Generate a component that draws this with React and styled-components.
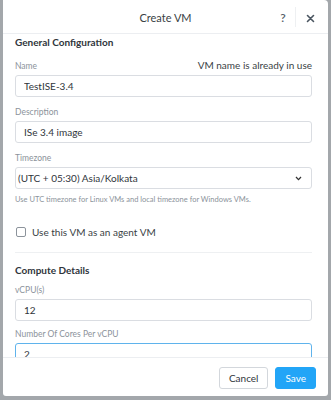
import React from "react";
import styled, { createGlobalStyle } from "styled-components";

const GlobalStyle = createGlobalStyle`
  html, body {
    margin: 0;
    padding: 0;
    background: #a3a7ab;
    font-family: Lato, "Liberation Sans", sans-serif;
    -webkit-font-smoothing: antialiased;
  }
`;

const App = () => {
  return (
    <>
      <GlobalStyle />
      <Backdrop>
        <Modal>
          <Header>
            <Title>Create VM</Title>
            <HeaderActions>
              <HeaderIcon>?</HeaderIcon>
              <Separator />
              <HeaderIcon close>
                <svg width="9" height="9" viewBox="0 0 9 9">
                  <path d="M1.5 1.5 L7.5 7.5 M7.5 1.5 L1.5 7.5" stroke="#4a5560" strokeWidth="1.6" strokeLinecap="round" />
                </svg>
              </HeaderIcon>
            </HeaderActions>
          </Header>

          <Body>
            <SectionTitle>General Configuration</SectionTitle>

            <Field>
              <LabelRow>
                <Label>Name</Label>
                <Warning>VM name is already in use</Warning>
              </LabelRow>
              <Input defaultValue="TestISE-3.4" />
            </Field>

            <Field>
              <Label>Description</Label>
              <Input defaultValue="ISe 3.4 image" />
            </Field>

            <Field>
              <Label>Timezone</Label>
              <SelectBox>
                <span>(UTC + 05:30) Asia/Kolkata</span>
                <svg width="7" height="5" viewBox="0 0 7 5">
                  <path d="M1 1 L3.5 3.6 L6 1" fill="none" stroke="#333" strokeWidth="1.3" />
                </svg>
              </SelectBox>
              <Help>Use UTC timezone for Linux VMs and local timezone for Windows VMs.</Help>
            </Field>

            <CheckRow>
              <CheckBox />
              <span>Use this VM as an agent VM</span>
            </CheckRow>

            <Divider />

            <SectionTitle compute>Compute Details</SectionTitle>

            <Field tight>
              <Label>vCPU(s)</Label>
              <Input defaultValue="12" />
            </Field>

            <Field tight>
              <Label>Number Of Cores Per vCPU</Label>
              <Input focused defaultValue="2" />
            </Field>
            <Spacer />
          </Body>

          <Footer>
            <Button>Cancel</Button>
            <Button primary>Save</Button>
          </Footer>
        </Modal>
      </Backdrop>
    </>
  );
};

export default App;

const Backdrop = styled.div`
  width: 331px;
  height: 400px;
  padding: 0 3px 4px 3px;
  box-sizing: border-box;
`;

const Modal = styled.div`
  height: 396px;
  background: #fff;
  border-radius: 0 4px 3px 3px;
  display: flex;
  flex-direction: column;
  overflow: hidden;
`;

const Header = styled.div`
  height: 34px;
  flex: none;
  display: flex;
  align-items: center;
  justify-content: center;
  position: relative;
  border-bottom: 1px solid #eceef1;
  box-sizing: border-box;
`;

const Title = styled.div`
  font-size: 11px;
  color: #3a3f45;
  margin-top: 2px;
`;

const HeaderActions = styled.div`
  position: absolute;
  right: 8px;
  top: 0;
  height: 34px;
  display: flex;
  align-items: center;
`;

const HeaderIcon = styled.div`
  width: 20px;
  display: flex;
  justify-content: center;
  align-items: center;
  font-size: 12px;
  font-weight: 600;
  color: #56606a;
  margin-top: ${(p) => (p.close ? "2px" : "1px")};
  margin-right: ${(p) => (p.close ? "0" : "-3px")};
`;

const Separator = styled.div`
  width: 1px;
  height: 20px;
  background: #eef0f2;
  margin: 0 4px 0 5px;
`;

const Body = styled.div`
  flex: 1;
  overflow-y: scroll;
  padding: 1px 12px 0 12px;
  margin-right: 0;

  &::-webkit-scrollbar {
    width: 6px;
  }
  &::-webkit-scrollbar-track {
    background: #f1f2f4;
    border-radius: 3px;
    margin-top: 6px;
  }
  &::-webkit-scrollbar-thumb {
    background: #b9bfc6;
    border-radius: 3px;
  }
`;

const SectionTitle = styled.div`
  font-size: 10px;
  font-weight: bold;
  color: #2f353b;
  line-height: 14px;
  margin-top: ${(p) => (p.compute ? "10px" : "0")};
  margin-bottom: ${(p) => (p.compute ? "7px" : "10px")};
`;

const Field = styled.div`
  margin-bottom: ${(p) => (p.tight ? "7px" : "9px")};
  padding-right: 4px;
`;

const LabelRow = styled.div`
  display: flex;
  justify-content: space-between;
  align-items: center;
`;

const Label = styled.div`
  font-size: 8.5px;
  line-height: 12px;
  color: #8c939b;
  margin-bottom: 3px;
`;

const Warning = styled.div`
  font-size: 10px;
  line-height: 12px;
  color: #3a3f45;
  margin-bottom: 4px;
`;

const Input = styled.input`
  display: block;
  width: 100%;
  height: 22px;
  box-sizing: border-box;
  border: 1px solid ${(p) => (p.focused ? "#5fb3ec" : "#dadde2")};
  border-radius: 3px;
  padding: 0 8px;
  font-family: inherit;
  font-size: 10px;
  color: #2f353b;
  outline: none;
`;

const SelectBox = styled.div`
  height: 22px;
  box-sizing: border-box;
  border: 1px solid #dadde2;
  border-radius: 3px;
  padding: 0 9px 0 2px;
  display: flex;
  align-items: center;
  justify-content: space-between;
  font-size: 10px;
  color: #2f353b;
`;

const Help = styled.div`
  font-size: 7.5px;
  line-height: 12px;
  color: #8c939b;
  margin-top: 5px;
`;

const CheckRow = styled.label`
  display: flex;
  align-items: center;
  gap: 6px;
  font-size: 10px;
  line-height: 14px;
  color: #3a3f45;
  margin-top: 19px;
`;

const CheckBox = styled.span`
  width: 8px;
  height: 8px;
  border: 1px solid #8c939b;
  border-radius: 2px;
  margin-left: 1px;
`;

const Divider = styled.div`
  height: 1px;
  background: #eef0f2;
  margin: 13px 4px 0 0;
`;

const Spacer = styled.div`
  height: 40px;
`;

const Footer = styled.div`
  height: 38px;
  flex: none;
  border-top: 1px solid #eceef1;
  display: flex;
  align-items: center;
  justify-content: flex-end;
  gap: 7px;
  padding: 0 12px 0 0;
`;

const Button = styled.button`
  height: 22px;
  padding: 0 ${(p) => (p.primary ? "9px" : "9px")};
  border-radius: 3px;
  border: 1px solid ${(p) => (p.primary ? "#22a5f7" : "#d3d7dc")};
  background: ${(p) => (p.primary ? "#22a5f7" : "#fff")};
  color: ${(p) => (p.primary ? "#fff" : "#2f353b")};
  font-family: inherit;
  font-size: 10px;
  margin-top: 1px;
`;
